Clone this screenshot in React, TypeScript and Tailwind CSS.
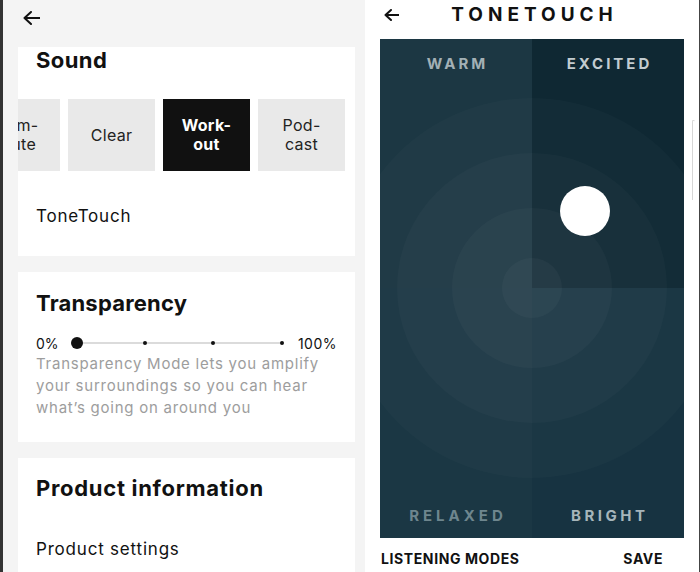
import React from "react";

const font = { fontFamily: "Inter, 'Liberation Sans', sans-serif" };

function BackArrow({ w, h }: { w: number; h: number }) {
  return (
    <svg width={w} height={h} viewBox={`0 0 ${w} ${h}`} fill="none">
      <path
        d={`M${w - 0.5} ${h / 2} H1.5 M${h / 2 + 1} 1 L1.5 ${h / 2} L${h / 2 + 1} ${h - 1}`}
        stroke="#111"
        strokeWidth="2"
        strokeLinecap="round"
        strokeLinejoin="round"
      />
    </svg>
  );
}

function ModeButton({ top, bottom, active }: { top: string; bottom?: string; active?: boolean }) {
  return (
    <div
      className={`w-[87px] h-[72px] shrink-0 flex flex-col items-center justify-center text-[16px] leading-[19px] tracking-[0.3px] ${
        active ? "bg-[#111111] text-white font-bold" : "bg-[#e9e9e9] text-[#222]"
      }`}
    >
      <span>{top}</span>
      {bottom && <span>{bottom}</span>}
    </div>
  );
}

export default function App() {
  return (
    <div className="flex w-[700px] h-[572px] overflow-hidden bg-white" style={font}>
      {/* Left panel */}
      <div className="w-[365px] h-full shrink-0 bg-[#f4f4f4] border-l-[3px] border-[#333] flex flex-col">
        <div className="h-[47px] pl-[20px] pt-[11px]">
          <BackArrow w={17} h={14} />
        </div>

        <div className="ml-[15px] w-[337px] bg-white pb-[28px] overflow-hidden">
          <div className="pl-[18px] text-[22px] leading-[26px] font-bold text-[#111] tracking-[0.4px]">Sound</div>
          <div className="mt-[26px] flex gap-2 -ml-[45px]">
            <ModeButton top="Com-" bottom="mute" />
            <ModeButton top="Clear" />
            <ModeButton top="Work-" bottom="out" active />
            <ModeButton top="Pod-" bottom="cast" />
          </div>
          <div className="mt-[33px] pl-[18px] text-[17px] leading-[24px] text-[#111] tracking-[0.8px]">ToneTouch</div>
        </div>

        <div className="mt-[16px] ml-[15px] w-[337px] bg-white pt-[18px] pb-[23px] px-[18px]">
          <div className="text-[22px] leading-[26px] font-bold text-[#111] tracking-[0.2px]">Transparency</div>
          <div className="mt-[17px] h-[20px] flex items-center text-[14px] text-[#111]">
            <span className="w-[20px]">0%</span>
            <svg className="ml-[15px]" width="217" height="14" viewBox="0 0 217 14">
              <line x1="6" y1="7" x2="211" y2="7" stroke="#cfcfcf" strokeWidth="1.5" />
              <circle cx="6" cy="7" r="6" fill="#111" />
              <circle cx="74" cy="7" r="2" fill="#111" />
              <circle cx="142" cy="7" r="2" fill="#111" />
              <circle cx="211" cy="7" r="2" fill="#111" />
            </svg>
            <span className="ml-auto tracking-[0.5px]">100%</span>
          </div>
          <div className="text-[15px] leading-[22px] text-[#9d9d9d] tracking-[0.75px] whitespace-nowrap">
            Transparency Mode lets you amplify
            <br />
            your surroundings so you can hear
            <br />
            what’s going on around you
          </div>
        </div>

        <div className="mt-[16px] ml-[15px] w-[337px] flex-1 bg-white pt-[17px] px-[18px]">
          <div className="text-[22px] leading-[26px] font-bold text-[#111] tracking-[0.7px]">Product information</div>
          <div className="mt-[36px] text-[17px] leading-[24px] text-[#111] tracking-[0.8px]">Product settings</div>
        </div>
      </div>

      {/* Right panel */}
      <div className="relative flex-1 h-full bg-white border-r border-[#444] flex flex-col">
        <div className="h-[39px] relative flex items-center justify-center">
          <div className="absolute left-[19px] top-[9px]">
            <BackArrow w={15} h={12} />
          </div>
          <div className="text-[19px] font-bold tracking-[5px] text-[#111] leading-none -mt-[10px] pl-[5px]">TONETOUCH</div>
        </div>

        <div className="relative ml-[15px] w-[304px] h-[499px] overflow-hidden">
          <div className="grid grid-cols-2 grid-rows-[249px_250px] h-full">
            <div className="bg-[#1c3743]" />
            <div className="bg-[#0f2833]" />
            <div className="bg-[#1b3744]" />
            <div className="bg-[#173341]" />
          </div>
          <svg className="absolute inset-0" width="304" height="499" viewBox="0 0 304 499">
            <circle cx="152" cy="249" r="190" fill="#ffffff" fillOpacity="0.018" />
            <circle cx="152" cy="249" r="135" fill="#ffffff" fillOpacity="0.022" />
            <circle cx="152" cy="249" r="80" fill="#ffffff" fillOpacity="0.028" />
            <circle cx="152" cy="249" r="30" fill="#ffffff" fillOpacity="0.03" />
          </svg>
          <div className="absolute inset-0 grid grid-cols-2 grid-rows-[249px_250px] text-[15px] font-bold">
            <div className="flex justify-center pt-[14px] text-[#a3b0b5] pl-[3px] tracking-[3px]">WARM</div>
            <div className="flex justify-center pt-[14px] text-[#c3ccd0] pl-[3px] tracking-[3px]">EXCITED</div>
            <div className="flex items-end justify-center pb-[11px] text-[#6e868e] pl-[4px] tracking-[4px]">RELAXED</div>
            <div className="flex items-end justify-center pb-[11px] text-[#a6b5ba] pl-[3.5px] tracking-[3.5px]">BRIGHT</div>
          </div>
          <div className="absolute left-[180px] top-[147px] w-[50px] h-[50px] rounded-full bg-white" />
        </div>

        <div className="ml-[16px] mr-[36px] mt-[12px] flex justify-between text-[14px] font-bold text-[#111] leading-[18px] tracking-[0.6px]">
          <span>LISTENING MODES</span>
          <span>SAVE</span>
        </div>

        <div className="absolute right-[4px] top-[120px] w-[3px] h-[80px] rounded-t-full border-l border-t border-[#d6d6d6]" />
      </div>
    </div>
  );
}
